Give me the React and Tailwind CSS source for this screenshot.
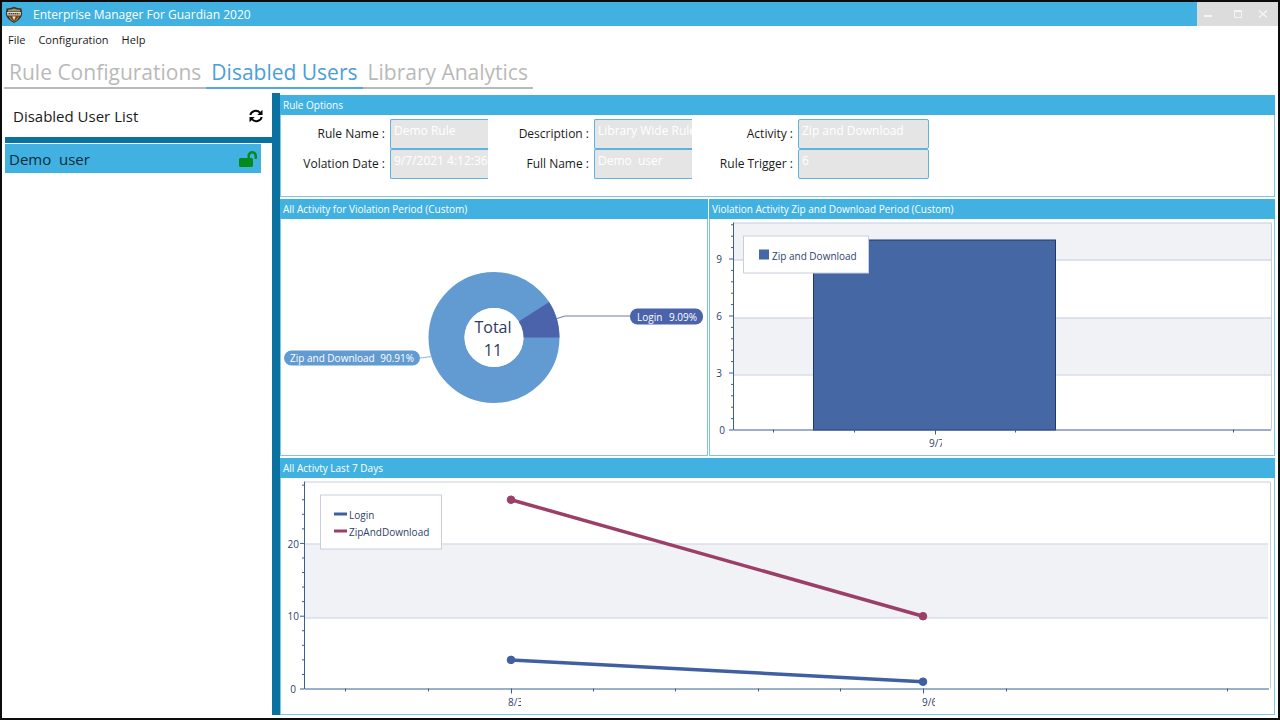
import { useState } from "react";
import { FaLockOpen } from "react-icons/fa";

const INK = "#2f3f6b";
const AXIS = "#3d5c9a";
const GRID = "#c9cde0";
const BAND = "#f0f2f6";
const BLUE = "#4567a4";
const PLUM = "#9c3f68";

function Shield() {
  return (
    <svg viewBox="0 0 18 18" className="h-[18px] w-[18px]" aria-hidden="true">
      <path d="M1.500 2.600 Q5.500 2.600 9 0.800 Q12.500 2.600 16.500 2.600 L17.200 8 Q16 13.600 9 17 Q2 13.600 0.800 8Z" fill="#3a332a" />
      <path d="M3 3.800 Q6 3.800 9 2.400 Q12 3.800 15 3.800 V5.500 H3Z" fill="#a8916b" />
      <path d="M2 6 H16 L15.600 9.500 H2.400Z" fill="#e2d9c6" />
      <path d="M3.500 7.800 H14.500" stroke="#4a4238" strokeWidth="1.600" strokeDasharray="1.600 0.500" />
      <path d="M3.500 10.500 H14.500 Q13 14 9 15.800 Q5 14 3.500 10.500Z" fill="#b98438" />
      <path d="M4.500 10.500 H7 L9 14.500 L11 10.500 H13.500 L9.500 15.200 H8.500Z" fill="#5a4528" />
      <path d="M7.500 10.500 H10.500 L9 14Z" fill="#f3ead8" />
    </svg>
  );
}

function RefreshIcon() {
  return (
    <svg viewBox="0 0 14 14" className="h-3.5 w-3.5" aria-hidden="true">
      <path d="M1.300 6 A5.600 5.200 0 0 1 11 3.600" fill="none" stroke="#000" strokeWidth="1.900" />
      <path d="M13.500 0.800 V6 H8.300Z" fill="#000" />
      <path d="M12.700 8 A5.600 5.200 0 0 1 3 10.400" fill="none" stroke="#000" strokeWidth="1.900" />
      <path d="M0.500 13.200 V8 H5.700Z" fill="#000" />
    </svg>
  );
}

function TitleBar() {
  return (
    <header className="flex h-6 bg-[#41b1e1]">
      <div className="flex flex-1 items-center gap-2.5 pt-0.5 pl-[3px]">
        <Shield />
        <h1 className="text-[12px] text-white">Enterprise Manager For Guardian 2020</h1>
      </div>
      <div className="flex w-[81px] items-center bg-[#dcdcdc] pr-1 text-[#f4f4f4]">
        <button aria-label="Minimize" className="flex h-full flex-1 items-center justify-center pr-2">
          <svg viewBox="0 0 10 10" className="h-2.5 w-2.5"><path d="M1 7H9" stroke="currentColor" strokeWidth="2" /></svg>
        </button>
        <button aria-label="Maximize" className="flex h-full flex-1 items-center justify-center">
          <svg viewBox="0 0 10 10" className="h-2.5 w-2.5" fill="none" stroke="currentColor"><path d="M1.500 1.500H8.500V8.500H1.500Z M1.500 2.500H8.500" /></svg>
        </button>
        <button aria-label="Close" className="flex h-full flex-1 items-center justify-center pl-1">
          <svg viewBox="0 0 10 10" className="h-2.5 w-2.5"><path d="M1 1.500L9 8.500M9 1.500L1 8.500" stroke="currentColor" strokeWidth="1.500" /></svg>
        </button>
      </div>
    </header>
  );
}

function MenuBar() {
  return (
    <nav className="flex h-7 items-center gap-[13px] px-1.5 text-[11px] text-[#1a1a1a]">
      <button>File</button>
      <button>Configuration</button>
      <button>Help</button>
    </nav>
  );
}

const TABS = ["Rule Configurations", "Disabled Users", "Library Analytics"];

function Tabs() {
  const [active, setActive] = useState(1);
  return (
    <div role="tablist" className="flex px-0.5 text-[21px] leading-[29px]">
      {TABS.map((tab, i) => (
        <button
          key={tab}
          role="tab"
          aria-selected={i === active}
          onClick={() => setActive(i)}
          className={
            i === active
              ? "border-b-2 border-[#4fabdd] px-[5px] pt-1 text-[#4a9fd8]"
              : "border-b-2 border-[#b9b9b9] px-[5px] pt-1 text-[#b9b9b9]"
          }
        >
          {tab}
        </button>
      ))}
    </div>
  );
}

function Sidebar() {
  return (
    <aside className="w-[267px] shrink-0">
      <div className="flex h-11 items-center justify-between pt-0.5 pr-[9px] pl-2">
        <h2 className="text-[15px] text-[#1a1a1a]">Disabled User List</h2>
        <button aria-label="Refresh">
          <RefreshIcon />
        </button>
      </div>
      <div className="h-1.5 bg-[#0b719f]" />
      <ul className="pt-px pr-[11px]">
        <li className="flex h-[29px] items-center justify-between bg-[#41b1e1] px-1">
          <span className="pt-0.5 text-[15px] whitespace-pre text-[#0d2a3a]">Demo  user</span>
          <button aria-label="Unlock Demo user">
            <FaLockOpen className="h-4 w-[18px] text-[#078a1c]" />
          </button>
        </li>
      </ul>
    </aside>
  );
}

function Panel({ title, className, children }) {
  return (
    <section className={`flex min-w-0 flex-col ${className}`}>
      <h2 className="flex h-5 shrink-0 items-center bg-[#41b1e1] px-[3px] pt-px text-[10px] text-white">{title}</h2>
      <div className="flex flex-1 flex-col border-r border-b border-l border-[#7fc6e6]">{children}</div>
    </section>
  );
}

const FIELDS = [
  { id: "rule-name", label: "Rule Name :", value: "Demo Rule" },
  { id: "description", label: "Description :", value: "Library Wide Rule" },
  { id: "activity", label: "Activity :", value: "Zip and Download", whole: true },
  { id: "violation-date", label: "Volation Date :", value: "9/7/2021 4:12:36" },
  { id: "full-name", label: "Full Name :", value: "Demo  user" },
  { id: "rule-trigger", label: "Rule Trigger :", value: "6", whole: true },
];

function RuleOptions() {
  return (
    <div className="grid grid-cols-[109px_98px_106px_98px_106px_131px] pt-1">
      {FIELDS.map((f) => (
        <div key={f.id} className="contents">
          <label htmlFor={f.id} className="pr-[5px] text-right text-[12px] leading-[30px] text-[#1a1a1a]">
            {f.label}
          </label>
          <input
            id={f.id}
            disabled
            defaultValue={f.value}
            className={
              f.whole
                ? "h-[30px] w-full rounded-xs border border-[#5db3dd] bg-[#e5e5e5] pb-2 pl-[3px] text-[12px] text-white"
                : "h-[30px] w-full rounded-l-xs border border-r-0 border-[#5db3dd] bg-[#e5e5e5] pb-2 pl-[3px] text-[12px] text-white"
            }
          />
        </div>
      ))}
    </div>
  );
}

function DonutChart() {
  return (
    <svg viewBox="0 0 426 235" className="w-full flex-1" role="img" aria-label="All activity by type">
      <circle cx="213" cy="118" r="47.500" fill="none" stroke="#629bd1" strokeWidth="36" />
      <path d="M213 118 H278.500 A65.500 65.500 0 0 0 268.100 82.600Z" fill="#4a63ab" />
      <circle cx="213" cy="118" r="29.500" fill="#fff" />
      <g fill="#2b3a63" fontSize="16" textAnchor="middle">
        <text x="212" y="113">Total</text>
        <text x="212" y="136">11</text>
      </g>
      <path d="M276 99 L284 96.500 H349" fill="none" stroke="#6a79b8" />
      <path d="M151 137 L139 138.500" stroke="#8db4dc" />
      <rect x="349" y="89" width="73" height="16" rx="7.500" fill="#4a63ab" />
      <rect x="3" y="131" width="136" height="15" rx="7.500" fill="#629bd1" />
      <g fill="#fff" fontSize="10">
        <text x="356" y="101">Login</text>
        <text x="416" y="101" textAnchor="end">9.09%</text>
        <text x="9" y="142">Zip and Download</text>
        <text x="133" y="142" textAnchor="end">90.91%</text>
      </g>
    </svg>
  );
}

function ClippedLabel({ id, x, y, width, children }) {
  return (
    <g>
      <clipPath id={id}>
        <rect x={x} y={y - 12} width={width} height="16" />
      </clipPath>
      <text x={x} y={y} clipPath={`url(#${id})`}>{children}</text>
    </g>
  );
}

function BarChart() {
  const y = (v) => 210.5 - v * 19;
  return (
    <svg viewBox="0 0 564 235" className="w-full flex-1" role="img" aria-label="Zip and download activity">
      <rect x="23" y="3" width="538" height="38" fill={BAND} />
      <rect x="23" y="98" width="538" height="57" fill={BAND} />
      <path d="M23 3.500H561.500V210M23 40.500H561M23 98.500H561M23 155.500H561" fill="none" stroke={GRID} />
      <rect x="103.500" y="20.500" width="242" height="190" fill={BLUE} stroke="#22386b" />
      <g stroke={AXIS}>
        <path d="M23.500 3V210.500H561" fill="none" />
        {Array.from({ length: 19 }, (_, i) => (
          <path key={i} d={`M${i % 5 === 0 ? 19 : 21} ${y(i * 0.6)}H23`} />
        ))}
        {[63.5, 144.5, 305.5, 523.5].map((x) => <path key={x} d={`M${x} 210v3`} />)}
        <path d="M225.500 210v5" />
      </g>
      <g fill={INK} fontSize="10">
        {[0, 3, 6, 9].map((v) => (
          <text key={v} x={v === 0 ? 15 : 12} y={y(v) + 4} textAnchor="end">{v}</text>
        ))}
        <ClippedLabel id="bar-day" x={219} y={227} width={13}>9/7</ClippedLabel>
      </g>
      <rect x="33.500" y="16.500" width="125" height="37" fill="#fff" stroke={GRID} />
      <rect x="49" y="30" width="10" height="10" fill={BLUE} />
      <text x="62" y="40" fill={INK} fontSize="10">Zip and Download</text>
    </svg>
  );
}

const SERIES = [
  { name: "ZipAndDownload", color: PLUM, values: [26, 10] },
  { name: "Login", color: "#3f5fa3", values: [4, 1] },
];
const DAYS = [230, 642];

function LineChart() {
  const y = (v) => 210.5 - v * 7.28;
  return (
    <svg viewBox="0 0 993 235" className="w-full flex-1" role="img" aria-label="Activity over the last seven days">
      <rect x="24" y="66" width="963" height="73" fill={BAND} />
      <path d="M24 3.500H989.500V210M24 65.500H987M24 139.500H987" fill="none" stroke={GRID} />
      <g stroke={AXIS}>
        <path d="M23.500 3V210.500H988" fill="none" />
        {Array.from({ length: 15 }, (_, i) => (
          <path key={i} d={`M${i % 5 === 0 ? 19 : 21} ${y(i * 2)}H23`} />
        ))}
        {[64.5, 147.5, 312.5, 394.5, 477.5, 559.5, 725.5, 946.5].map((x) => <path key={x} d={`M${x} 210v3`} />)}
        {DAYS.map((x) => <path key={x} d={`M${x + 0.5} 210v5`} />)}
      </g>
      {SERIES.map((s) => (
        <g key={s.name} stroke={s.color} fill={s.color}>
          <path d={`M${DAYS[0]} ${y(s.values[0])}L${DAYS[1]} ${y(s.values[1])}`} strokeWidth="3.500" />
          {s.values.map((v, i) => <circle key={i} cx={DAYS[i]} cy={y(v)} r="3.800" />)}
        </g>
      ))}
      <g fill={INK} fontSize="10">
        <text x="15" y="214" textAnchor="end">0</text>
        <text x="18" y="141" textAnchor="end">10</text>
        <text x="18" y="69" textAnchor="end">20</text>
        <ClippedLabel id="day-first" x={227} y={227} width={13}>8/30</ClippedLabel>
        <ClippedLabel id="day-last" x={641} y={227} width={13}>9/6</ClippedLabel>
      </g>
      <rect x="39.500" y="16.500" width="121" height="54" fill="#fff" stroke={GRID} />
      <path d="M53 35.500H66" stroke="#3f5fa3" strokeWidth="3" />
      <path d="M53 52.500H66" stroke={PLUM} strokeWidth="3" />
      <g fill={INK} fontSize="10">
        <text x="68" y="40">Login</text>
        <text x="68" y="57">ZipAndDownload</text>
      </g>
    </svg>
  );
}

export default function App() {
  return (
    <div className="flex min-h-screen flex-col border-2 border-[#0c0c0c] bg-white font-['Open_Sans','Noto_Sans',sans-serif]">
      <TitleBar />
      <MenuBar />
      <Tabs />
      <div className="flex flex-1 pt-1 pr-[3px] pb-[3px] pl-[3px]">
        <Sidebar />
        <div className="w-2 shrink-0 bg-[#0b719f]" />
        <main className="flex min-w-0 flex-1 flex-col gap-0.5 pt-0.5">
          <Panel title="Rule Options" className="h-[102px] shrink-0">
            <RuleOptions />
          </Panel>
          <div className="grid flex-1 grid-cols-[428fr_566fr] gap-px">
            <Panel title="All Activity for Violation Period (Custom)" className="">
              <DonutChart />
            </Panel>
            <Panel title="Violation Activity Zip and Download Period (Custom)" className="">
              <BarChart />
            </Panel>
          </div>
          <Panel title="All Activty Last 7 Days" className="flex-1">
            <LineChart />
          </Panel>
        </main>
      </div>
    </div>
  );
}
